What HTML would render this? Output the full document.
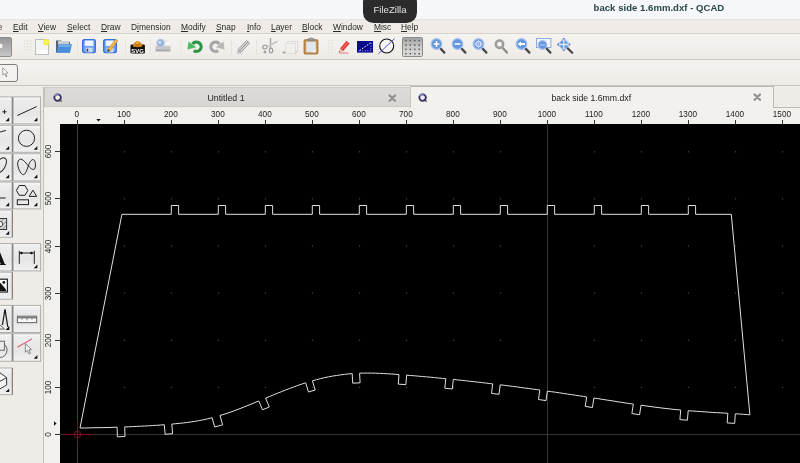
<!DOCTYPE html>
<html><head><meta charset="utf-8"><title>back side 1.6mm.dxf - QCAD</title>
<style>
*{margin:0;padding:0;box-sizing:border-box}
html,body{width:800px;height:463px;overflow:hidden;background:#efebe7;font-family:"Liberation Sans","DejaVu Sans",sans-serif;}
#root{will-change:transform;position:relative;width:800px;height:463px;overflow:hidden;background:#efebe7}
#title{position:absolute;left:0;top:0;width:800px;height:19px;background:#f5f7fa}
#title b{position:absolute;left:593.6px;top:2px;font-size:9.5px;line-height:12px;color:#2b4648;white-space:nowrap;letter-spacing:0.05px}
#tip{position:absolute;left:363px;top:-8px;width:54px;height:31px;border-radius:10.5px;background:#2b2b2b;color:#e2e2e2;font-size:9.6px;text-align:center;line-height:12px;padding-top:12.4px}
#menu{position:absolute;left:0;top:19px;width:800px;height:14px;background:linear-gradient(#e6e2dd,#efebe6 2.5px,#efebe6 11px,#f1e9e7)}
.mi{position:absolute;top:1.5px;font-size:8.8px;line-height:12px;color:#2a2a2a;white-space:nowrap;transform:scaleX(.955);transform-origin:0 0}
.mi u{text-decoration:underline;text-underline-offset:1px}
#tb1{position:absolute;left:0;top:33px;width:800px;height:27px;background:linear-gradient(#f5f3f0,#eeebe7);border-top:1px solid #d6d2cc;border-bottom:1px solid #c9c5c0}
#tb2{position:absolute;left:0;top:60px;width:800px;height:26px;background:linear-gradient(#f5f3f0,#eeebe7);border-bottom:1px solid #c9c5c0}
.ic{position:absolute;top:39px;width:16px;height:16px}
.sep{position:absolute;top:39px;width:1px;height:16px;background:#d6d2cd}
#left{position:absolute;left:0;top:87px;width:44px;height:376px;background:#efebe7;border-right:1px solid #c4c0bb}
.tbn{position:absolute;width:28px;height:28px;border:1px solid #c9c6c2;background:linear-gradient(#f6f6f6,#e2e1e0);}
.tbn:after{content:"";position:absolute;right:2px;bottom:2px;border-left:4px solid transparent;border-bottom:4px solid #111}
.tbn.na:after{display:none}
.tbn svg{position:absolute;left:0;top:0}
#tabs{position:absolute;left:44px;top:87px;width:756px;height:21px;background:#efebe7}
.tab{position:absolute;top:1.3px;height:21px;white-space:nowrap;overflow:visible;font-size:8.8px;line-height:21px;color:#222;text-align:center}
#hr{position:absolute;left:44px;top:108px;width:756px;height:16px;background:#f2f0ed}
#vr{position:absolute;left:44px;top:108px;width:16px;height:355px;background:#f2f0ed}
.rl{position:absolute;top:2px;width:30px;text-align:center;font-size:8.2px;line-height:9px;color:#222}
.tk{position:absolute;top:12px;width:1px;height:4px;background:#333}
.vl{position:absolute;left:-7px;width:30px;height:9px;text-align:center;font-size:8.2px;line-height:9px;color:#222;transform:rotate(-90deg);transform-origin:center}
.vk{position:absolute;left:12px;width:5px;height:1px;background:#333}
#cv{position:absolute;left:60px;top:124px;width:740px;height:339px;background:#000}
</style></head><body><div id="root">
<div id="title"><b>back side 1.6mm.dxf - QCAD</b></div>
<div id="menu"><span class="mi" style="left:-11.4px"><u>F</u>ile</span><span class="mi" style="left:13.0px"><u>E</u>dit</span><span class="mi" style="left:38.0px"><u>V</u>iew</span><span class="mi" style="left:67.0px"><u>S</u>elect</span><span class="mi" style="left:101.0px"><u>D</u>raw</span><span class="mi" style="left:130.8px">D<u>i</u>mension</span><span class="mi" style="left:181.0px"><u>M</u>odify</span><span class="mi" style="left:216.3px"><u>S</u>nap</span><span class="mi" style="left:246.9px"><u>I</u>nfo</span><span class="mi" style="left:270.7px"><u>L</u>ayer</span><span class="mi" style="left:302.3px"><u>B</u>lock</span><span class="mi" style="left:333.3px"><u>W</u>indow</span><span class="mi" style="left:374.2px"><u>M</u>isc</span><span class="mi" style="left:401.3px"><u>H</u>elp</span></div>
<div id="tb1"></div>
<div id="tb2"></div>
<div style="position:absolute;left:-10px;top:37px;width:22px;height:20px;border:1px solid #8f8d8a;border-radius:2px;background:linear-gradient(#979797,#c6c6c6)"></div><svg style="position:absolute;left:0px;top:43px" width="4" height="7" viewBox="0 0 4 7" ><circle cx="0.5" cy="3" r="2.2" fill="#f4f4f4"/></svg><svg style="position:absolute;left:24px;top:40px" width="9" height="12" viewBox="0 0 9 12" ><rect x="0" y="0" width="1.5" height="1.5" fill="#e5e1dc"/><rect x="3" y="0" width="1.5" height="1.5" fill="#e5e1dc"/><rect x="6" y="0" width="1.5" height="1.5" fill="#e5e1dc"/><rect x="0" y="3" width="1.5" height="1.5" fill="#e5e1dc"/><rect x="3" y="3" width="1.5" height="1.5" fill="#e5e1dc"/><rect x="6" y="3" width="1.5" height="1.5" fill="#e5e1dc"/><rect x="0" y="6" width="1.5" height="1.5" fill="#e5e1dc"/><rect x="3" y="6" width="1.5" height="1.5" fill="#e5e1dc"/><rect x="6" y="6" width="1.5" height="1.5" fill="#e5e1dc"/><rect x="0" y="9" width="1.5" height="1.5" fill="#e5e1dc"/><rect x="3" y="9" width="1.5" height="1.5" fill="#e5e1dc"/><rect x="6" y="9" width="1.5" height="1.5" fill="#e5e1dc"/></svg><svg style="position:absolute;left:34px;top:38px" width="17" height="18" viewBox="0 0 17 18" ><rect x="1.5" y="1.5" width="13" height="15" fill="#f4f4f4" stroke="#bdbdbd"/><rect x="2.5" y="12" width="11" height="4" fill="#fff" opacity=".8"/><circle cx="12.3" cy="4.2" r="3.1" fill="#f2ee3a"/><circle cx="12.3" cy="4.2" r="1.6" fill="#fbf96a"/></svg><svg style="position:absolute;left:55px;top:39px" width="18" height="16" viewBox="0 0 18 16" ><path d="M1 1.5 L6 1.5 L7.5 3 L15 3 L15 13.5 L1 13.5 Z" fill="#56606c"/><path d="M3 2 L14 2 L14 6 L3 6Z" fill="#c9ced4"/><path d="M3.2 5.2 L17 5.2 L15 13.8 L1.5 13.8 Z" fill="#4a8fdc"/><path d="M3.8 6 L16 6 L15.6 8 L3.4 8Z" fill="#6fa9e8"/></svg><svg style="position:absolute;left:82.3px;top:39.4px" width="15" height="15" viewBox="0 0 15 15" ><rect x="0.7" y="0.7" width="12.6" height="12.8" rx="1.5" fill="#72a2f2" stroke="#3273e4" stroke-width="1.4"/><rect x="2.8" y="1.5" width="8.6" height="5.4" fill="#f1f5fb"/><rect x="3.6" y="8.8" width="7" height="4.6" fill="#cdd9ef"/><rect x="4.6" y="9.8" width="1.6" height="2.8" fill="#2c3f6a"/></svg><svg style="position:absolute;left:103.3px;top:38.4px" width="17" height="17" viewBox="0 0 17 17" ><g transform="translate(0,1)"><rect x="0.7" y="0.7" width="12.6" height="12.8" rx="1.5" fill="#72a2f2" stroke="#3273e4" stroke-width="1.4"/><rect x="2.8" y="1.5" width="8.6" height="5.4" fill="#f1f5fb"/><rect x="3.6" y="8.8" width="7" height="4.6" fill="#cdd9ef"/><rect x="4.6" y="9.8" width="1.6" height="2.8" fill="#2c3f6a"/></g><path d="M5 11.2 L12.6 1.2 L14.8 2.9 L7.2 12.8 Z" fill="#f0b93a" stroke="#c98a1a" stroke-width=".6"/><path d="M5 11.2 L7.2 12.8 L4.2 14Z" fill="#444"/></svg><svg style="position:absolute;left:130px;top:39.5px" width="16" height="15" viewBox="0 0 16 15" ><rect x="0.5" y="4.6" width="14.4" height="8.8" rx="1.2" fill="#111"/><path d="M2.6 6.4 L4.4 2.8 L7.6 0.8 L10.8 2.8 L12.6 6.4 Q7.6 8 2.6 6.4Z" fill="#c27812"/><circle cx="7.6" cy="2.6" r="1.7" fill="#f2a83c"/><circle cx="4.4" cy="4.6" r="1.4" fill="#dc8e26"/><circle cx="10.8" cy="4.6" r="1.4" fill="#dc8e26"/><text x="7.7" y="12.6" font-family="Liberation Sans,sans-serif" font-size="6" font-weight="bold" fill="#fff" text-anchor="middle">SVG</text></svg><svg style="position:absolute;left:154px;top:38px" width="18" height="16" viewBox="0 0 18 16" ><path d="M4 2 L13 2 L15 8 L2 8Z" fill="#e6e8ec"/><rect x="1.5" y="8" width="15" height="5" rx="1" fill="#c8c8c8"/><rect x="1.5" y="11.5" width="15" height="2" rx="1" fill="#a9a9a9"/><circle cx="6.5" cy="5" r="3.6" fill="#8fb0e0" stroke="#b9c4d8" stroke-width="1.2"/><circle cx="5.8" cy="4.4" r="1.4" fill="#dce8fa"/><rect x="11" y="4" width="4" height="3" fill="#f6f6f6"/></svg><svg style="position:absolute;left:180px;top:40px" width="3" height="15" viewBox="0 0 3 15" ><rect x="0" y="0" width="1.5" height="1.5" fill="#e5e1dc"/><rect x="0" y="3" width="1.5" height="1.5" fill="#e5e1dc"/><rect x="0" y="6" width="1.5" height="1.5" fill="#e5e1dc"/><rect x="0" y="9" width="1.5" height="1.5" fill="#e5e1dc"/><rect x="0" y="12" width="1.5" height="1.5" fill="#e5e1dc"/></svg><svg style="position:absolute;left:186px;top:39px" width="19" height="15" viewBox="0 0 19 15" ><path d="M6.6 5 A4.7 4.7 0 1 1 7.8 11.6" fill="none" stroke="#2a9444" stroke-width="3.1"/><path d="M2.6 2.4 L1.4 10.6 L10.2 8.2 Z" fill="#4db862"/></svg><svg style="position:absolute;left:207px;top:39px" width="19" height="15" viewBox="0 0 19 15" ><path d="M12.4 5 A4.7 4.7 0 1 0 11.2 11.6" fill="none" stroke="#a6a6a6" stroke-width="3.1"/><path d="M16.4 2.4 L17.6 10.6 L8.8 8.2 Z" fill="#b6b6b6"/></svg><svg style="position:absolute;left:235px;top:39px" width="17" height="16" viewBox="0 0 17 16" ><path d="M3 10.5 L11.5 1.5 L14.5 4.2 L6 13.2 Z" fill="#d9d9d9" stroke="#9c9c9c" stroke-width="1"/><path d="M4.5 11.8 L13 2.8" stroke="#8a8a8a" stroke-width="1"/><path d="M3 10.5 L6 13.2 L2 14.2Z" fill="#b5b5b5"/><rect x="2" y="14.3" width="6" height="1" fill="#d0d0d0"/></svg><svg style="position:absolute;left:260px;top:37px" width="19" height="18" viewBox="0 0 19 18" ><path d="M10.5 1 L10.5 11" stroke="#a8a8a8" stroke-width="1.4"/><path d="M17.5 4.2 L8.5 9" stroke="#c4c4c4" stroke-width="1.6"/><ellipse cx="5" cy="10" rx="2.3" ry="1.8" fill="none" stroke="#9d9d9d" stroke-width="1.2" transform="rotate(-20 5 10)"/><ellipse cx="11" cy="13.5" rx="1.7" ry="2.4" fill="none" stroke="#9d9d9d" stroke-width="1.2"/><path d="M3.5 15 L6.5 15 M5 13.5 L5 16.5" stroke="#888" stroke-width="1"/></svg><svg style="position:absolute;left:282px;top:40px" width="18" height="15" viewBox="0 0 18 15" ><rect x="5.5" y="1.5" width="10" height="10" fill="#f4f3f1" stroke="#dcdad7"/><rect x="3.5" y="3.5" width="10" height="10" fill="#f1efec" stroke="#e0deda"/><path d="M13.5 11 L16 11 L13.5 13.5Z" fill="#ccc"/><path d="M0.8 12.5 L3.2 12.5 M2 11.3 L2 13.7" stroke="#999" stroke-width="1"/></svg><svg style="position:absolute;left:303px;top:37px" width="17" height="18" viewBox="0 0 17 18" ><rect x="1.2" y="2.8" width="13.6" height="14" rx="1" fill="#c8955a" stroke="#a87a3a" stroke-width="1.2"/><rect x="3.2" y="4.6" width="9.6" height="10.6" fill="#dfe6ee"/><path d="M9 15.2 L12.8 11.5 L12.8 15.2Z" fill="#f6f6f6"/><rect x="4.8" y="1" width="6.4" height="3.2" rx="1.2" fill="#8a8a8a"/><rect x="6.4" y="0.4" width="3.2" height="2" rx="1" fill="#a5a5a5"/></svg><svg style="position:absolute;left:328px;top:40px" width="6" height="15" viewBox="0 0 6 15" ><rect x="0" y="0" width="1.5" height="1.5" fill="#e5e1dc"/><rect x="3" y="0" width="1.5" height="1.5" fill="#e5e1dc"/><rect x="0" y="3" width="1.5" height="1.5" fill="#e5e1dc"/><rect x="3" y="3" width="1.5" height="1.5" fill="#e5e1dc"/><rect x="0" y="6" width="1.5" height="1.5" fill="#e5e1dc"/><rect x="3" y="6" width="1.5" height="1.5" fill="#e5e1dc"/><rect x="0" y="9" width="1.5" height="1.5" fill="#e5e1dc"/><rect x="3" y="9" width="1.5" height="1.5" fill="#e5e1dc"/><rect x="0" y="12" width="1.5" height="1.5" fill="#e5e1dc"/><rect x="3" y="12" width="1.5" height="1.5" fill="#e5e1dc"/></svg><svg style="position:absolute;left:337px;top:39px" width="15" height="15" viewBox="0 0 15 15" ><path d="M3 9.6 L9.6 1.8 L12.6 4.4 L6 12.2 Z" fill="#e23a32"/><path d="M4.4 10.8 L11 3" stroke="#f2837d" stroke-width="1"/><path d="M3 9.6 L6 12.2 L1.8 13.2Z" fill="#e9b9a0"/><path d="M1.8 13.2 L3 12.9 L2.4 12.1Z" fill="#333"/><rect x="2" y="13.4" width="9.5" height="1.2" fill="#e98b8b"/></svg><svg style="position:absolute;left:357px;top:41px" width="17" height="12" viewBox="0 0 17 12" ><rect x="0" y="0" width="16" height="11.6" fill="#0a0a8c"/><path d="M2.5 9.5 L13.5 2" stroke="#fff" stroke-width="1" stroke-dasharray="1.5 1.5"/><path d="M2.5 9.8 L14 9.8 L14 1.8" fill="none" stroke="#b9c0ff" stroke-width=".9" stroke-dasharray="1 1.6"/></svg><svg style="position:absolute;left:377px;top:37px" width="19" height="18" viewBox="0 0 19 18" ><circle cx="9.7" cy="9" r="7" fill="#f6f5f3" stroke="#111" stroke-width="1.1"/><path d="M1.5 16.8 L17.5 1.6" stroke="#4a5ad8" stroke-width="1"/></svg><div style="position:absolute;left:402px;top:36.5px;width:21px;height:20.5px;border:1px solid #8c8a87;border-radius:1.5px;background:linear-gradient(#a4a4a4,#cfcfcf 60%,#dadada)"></div><svg style="position:absolute;left:402px;top:37px" width="21" height="20" viewBox="0 0 21 20" ><rect x="3.2" y="2.8" width="1.5" height="1.5" fill="#5a5a5a"/><rect x="7.6" y="2.8" width="1.5" height="1.5" fill="#5a5a5a"/><rect x="12.0" y="2.8" width="1.5" height="1.5" fill="#5a5a5a"/><rect x="16.4" y="2.8" width="1.5" height="1.5" fill="#5a5a5a"/><rect x="3.2" y="7.2" width="1.5" height="1.5" fill="#5a5a5a"/><rect x="7.6" y="7.2" width="1.5" height="1.5" fill="#5a5a5a"/><rect x="12.0" y="7.2" width="1.5" height="1.5" fill="#5a5a5a"/><rect x="16.4" y="7.2" width="1.5" height="1.5" fill="#5a5a5a"/><rect x="3.2" y="11.6" width="1.5" height="1.5" fill="#5a5a5a"/><rect x="7.6" y="11.6" width="1.5" height="1.5" fill="#5a5a5a"/><rect x="12.0" y="11.6" width="1.5" height="1.5" fill="#5a5a5a"/><rect x="16.4" y="11.6" width="1.5" height="1.5" fill="#5a5a5a"/><rect x="3.2" y="16.0" width="1.5" height="1.5" fill="#5a5a5a"/><rect x="7.6" y="16.0" width="1.5" height="1.5" fill="#5a5a5a"/><rect x="12.0" y="16.0" width="1.5" height="1.5" fill="#5a5a5a"/><rect x="16.4" y="16.0" width="1.5" height="1.5" fill="#5a5a5a"/></svg><svg style="position:absolute;left:430px;top:38px" width="17" height="17" viewBox="0 0 17 17" ><path d="M10.4 10.4 L14.4 14.6" stroke="#4a4a4a" stroke-width="2.3" stroke-linecap="round"/><circle cx="6.5" cy="6" r="5.3" fill="#6595dc" stroke="#a3c0ee" stroke-width="1.2"/><path d="M3.6 6 L9.4 6 M6.5 3.1 L6.5 8.9" stroke="#fff" stroke-width="1.6"/></svg><svg style="position:absolute;left:451px;top:38px" width="17" height="17" viewBox="0 0 17 17" ><path d="M10.4 10.4 L14.4 14.6" stroke="#4a4a4a" stroke-width="2.3" stroke-linecap="round"/><circle cx="6.5" cy="6" r="5.3" fill="#6595dc" stroke="#a3c0ee" stroke-width="1.2"/><path d="M3.6 6 L9.4 6" stroke="#fff" stroke-width="1.6"/></svg><svg style="position:absolute;left:472px;top:38px" width="17" height="17" viewBox="0 0 17 17" ><path d="M10.4 10.4 L14.4 14.6" stroke="#4a4a4a" stroke-width="2.3" stroke-linecap="round"/><circle cx="6.5" cy="6" r="5.3" fill="#6595dc" stroke="#a3c0ee" stroke-width="1.2"/><circle cx="6.5" cy="6" r="2.6" fill="none" stroke="#d9e6fa" stroke-width="1.3"/><path d="M6.5 1.5 L6.5 10.5 M2 6 L11 6" stroke="#c3d7f5" stroke-width=".8"/></svg><svg style="position:absolute;left:493px;top:38px" width="17" height="17" viewBox="0 0 17 17" ><path d="M9.6 9.8 L14 14.6" stroke="#8e8e8e" stroke-width="2.3" stroke-linecap="round"/><circle cx="6.5" cy="6.2" r="3.7" fill="#f2f2f2" stroke="#9c9c9c" stroke-width="2.5"/></svg><svg style="position:absolute;left:514.5px;top:38px" width="17" height="17" viewBox="0 0 17 17" ><path d="M10.4 10.4 L14.4 14.6" stroke="#4a4a4a" stroke-width="2.3" stroke-linecap="round"/><circle cx="6.5" cy="6" r="5.3" fill="#6595dc" stroke="#a3c0ee" stroke-width="1.2"/><path d="M2.4 6 L6 3.4 L6 5 L10 5 L10 7 L6 7 L6 8.6Z" fill="#fff"/></svg><svg style="position:absolute;left:536px;top:38px" width="17" height="17" viewBox="0 0 17 17" ><rect x="0.5" y="0.5" width="14.4" height="9" fill="#f4f6fb" stroke="#8fa8dc" stroke-width="1"/><path d="M10.4 10.4 L14.4 14.6" stroke="#4a4a4a" stroke-width="2.3" stroke-linecap="round"/><circle cx="6.5" cy="7" r="4.3" fill="#6595dc" stroke="#a3c0ee" stroke-width="1.2"/><path d="M4 7 L9 7" stroke="#a9c4ee" stroke-width="1.4"/></svg><svg style="position:absolute;left:556px;top:37px" width="19" height="18" viewBox="0 0 19 18" ><path d="M11.4 11 L16.2 15.8" stroke="#4a4a4a" stroke-width="2.3" stroke-linecap="round"/><circle cx="7.8" cy="7.5" r="4.4" fill="#6595dc" stroke="#a3c0ee" stroke-width="1"/><path d="M7.8 0.4 L9.8 2.8 L5.8 2.8Z M7.8 14.6 L9.8 12.2 L5.8 12.2Z M0.7 7.5 L3.1 5.5 L3.1 9.5Z M14.9 7.5 L12.5 5.5 L12.5 9.5Z" fill="#5b8bd6"/><path d="M7.8 2.6 L7.8 12.4 M2.9 7.5 L12.7 7.5" stroke="#e3ecfb" stroke-width="1.3"/></svg><i style="position:absolute;left:76.5px;top:39px;width:1px;height:16px;background:#e6e2dd"></i><i style="position:absolute;left:124.5px;top:39px;width:1px;height:16px;background:#e6e2dd"></i><i style="position:absolute;left:150.0px;top:39px;width:1px;height:16px;background:#e6e2dd"></i><i style="position:absolute;left:230.5px;top:39px;width:1px;height:16px;background:#e6e2dd"></i><i style="position:absolute;left:256.1px;top:39px;width:1px;height:16px;background:#e6e2dd"></i><div style="position:absolute;left:-6px;top:64.2px;width:24px;height:17.4px;border:1.2px solid #807e7c;border-radius:3px;background:#f4f2f0"></div><svg style="position:absolute;left:2px;top:67px" width="7" height="11" viewBox="0 0 7 11" ><path d="M0.8 0.8 L0.8 8.2 L2.6 6.6 L4 9.8 L5 9.3 L3.7 6.2 L6 6 Z" fill="#fbfbfb" stroke="#8b8b8b" stroke-width=".8"/></svg>
<div id="tip">FileZilla</div>
<div id="left">
<svg style="position:absolute;left:0;top:0" width="43" height="376" viewBox="0 0 43 376"><defs><linearGradient id="bg" x1="0" y1="0" x2="0" y2="1"><stop offset="0" stop-color="#fbfbfb"/><stop offset="0.12" stop-color="#ededed"/><stop offset="0.6" stop-color="#e6e6e6"/><stop offset="1" stop-color="#f1f1f1"/></linearGradient></defs><rect x="-16" y="9.9" width="28" height="27.0" fill="url(#bg)" stroke="#b0aeab" stroke-width="1"/><path d="M9.2 34.300000000000004 L5.499999999999999 34.300000000000004 L9.2 30.600000000000005Z" fill="#111"/><rect x="13.2" y="9.9" width="27.4" height="27.0" fill="url(#bg)" stroke="#b0aeab" stroke-width="1"/><path d="M37.4 34.300000000000004 L33.699999999999996 34.300000000000004 L37.4 30.600000000000005Z" fill="#111"/><rect x="12.1" y="9.9" width="0.9" height="27.0" fill="#7c7c7c"/><rect x="-16" y="38.3" width="28" height="27.0" fill="url(#bg)" stroke="#b0aeab" stroke-width="1"/><path d="M9.2 62.70000000000001 L5.499999999999999 62.70000000000001 L9.2 59.00000000000001Z" fill="#111"/><rect x="13.2" y="38.3" width="27.4" height="27.0" fill="url(#bg)" stroke="#b0aeab" stroke-width="1"/><path d="M37.4 62.70000000000001 L33.699999999999996 62.70000000000001 L37.4 59.00000000000001Z" fill="#111"/><rect x="12.1" y="38.3" width="0.9" height="27.0" fill="#7c7c7c"/><rect x="-16" y="66.8" width="28" height="27.1" fill="url(#bg)" stroke="#b0aeab" stroke-width="1"/><path d="M9.2 91.30000000000001 L5.499999999999999 91.30000000000001 L9.2 87.60000000000001Z" fill="#111"/><rect x="13.2" y="66.8" width="27.4" height="27.1" fill="url(#bg)" stroke="#b0aeab" stroke-width="1"/><path d="M37.4 91.30000000000001 L33.699999999999996 91.30000000000001 L37.4 87.60000000000001Z" fill="#111"/><rect x="12.1" y="66.8" width="0.9" height="27.1" fill="#7c7c7c"/><rect x="-16" y="95.1" width="28" height="26.8" fill="url(#bg)" stroke="#b0aeab" stroke-width="1"/><path d="M9.2 119.30000000000001 L5.499999999999999 119.30000000000001 L9.2 115.60000000000001Z" fill="#111"/><rect x="13.2" y="95.1" width="27.4" height="26.8" fill="url(#bg)" stroke="#b0aeab" stroke-width="1"/><path d="M37.4 119.30000000000001 L33.699999999999996 119.30000000000001 L37.4 115.60000000000001Z" fill="#111"/><rect x="12.1" y="95.1" width="0.9" height="26.8" fill="#7c7c7c"/><rect x="-16" y="123.0" width="28" height="27.3" fill="url(#bg)" stroke="#b0aeab" stroke-width="1"/><path d="M9.2 147.70000000000002 L5.499999999999999 147.70000000000002 L9.2 144.00000000000003Z" fill="#111"/><rect x="12.1" y="123.0" width="0.9" height="27.3" fill="#7c7c7c"/><rect x="-16" y="156.6" width="28" height="27.3" fill="url(#bg)" stroke="#b0aeab" stroke-width="1"/><rect x="13.2" y="156.6" width="27.4" height="27.3" fill="url(#bg)" stroke="#b0aeab" stroke-width="1"/><path d="M37.4 181.29999999999998 L33.699999999999996 181.29999999999998 L37.4 177.6Z" fill="#111"/><rect x="12.1" y="156.6" width="0.9" height="27.3" fill="#7c7c7c"/><rect x="-16" y="185.2" width="28" height="27.1" fill="url(#bg)" stroke="#b0aeab" stroke-width="1"/><rect x="12.1" y="185.2" width="0.9" height="27.1" fill="#7c7c7c"/><rect x="-16" y="218.4" width="28" height="27.1" fill="url(#bg)" stroke="#b0aeab" stroke-width="1"/><path d="M9.2 242.9 L5.499999999999999 242.9 L9.2 239.20000000000002Z" fill="#111"/><rect x="13.2" y="218.4" width="27.4" height="27.1" fill="url(#bg)" stroke="#b0aeab" stroke-width="1"/><rect x="12.1" y="218.4" width="0.9" height="27.1" fill="#7c7c7c"/><rect x="-16" y="246.8" width="28" height="27.5" fill="url(#bg)" stroke="#b0aeab" stroke-width="1"/><rect x="13.2" y="246.8" width="27.4" height="27.5" fill="url(#bg)" stroke="#b0aeab" stroke-width="1"/><path d="M37.4 271.7 L33.699999999999996 271.7 L37.4 268.0Z" fill="#111"/><rect x="12.1" y="246.8" width="0.9" height="27.5" fill="#7c7c7c"/><rect x="-16" y="281.0" width="28" height="26.7" fill="url(#bg)" stroke="#b0aeab" stroke-width="1"/><path d="M9.2 305.09999999999997 L5.499999999999999 305.09999999999997 L9.2 301.4Z" fill="#111"/><rect x="12.1" y="281.0" width="0.9" height="26.7" fill="#7c7c7c"/><path d="M2.4 24.799999999999997 L6.6 24.799999999999997 M4.5 22.700000000000003 L4.5 26.900000000000006" fill="none" stroke="#222" stroke-width="1"/><path d="M17.3 28.5 L36.7 19.599999999999994" fill="none" stroke="#222" stroke-width="1"/><path d="M-6 48 Q0 44.400000000000006 6 43.400000000000006" fill="none" stroke="#222" stroke-width="1"/><circle cx="26.5" cy="51.30000000000001" r="8.1" fill="none" stroke="#222" stroke-width="1"/><ellipse cx="0.5" cy="78.5" rx="4.6" ry="8.6" transform="rotate(32 0.5 78.5)" fill="none" stroke="#222" stroke-width="1"/><path d="M18.2 74 C21 69 25.5 75.5 28.5 79 C31 82 35 85 35.4 79 C35.8 73 33 70.5 30.4 74.5 C27.5 79 26 89.5 22.4 87.4 C19.4 85.6 16.4 77.4 18.2 74Z" fill="none" stroke="#222" stroke-width="1"/><path d="M-4 111 L5.6 111" fill="none" stroke="#222" stroke-width="1"/><path d="M27.8 103.4 L25.0 108.3 L19.3 108.3 L16.4 103.4 L19.2 98.5 L25.0 98.5Z" fill="none" stroke="#222" stroke-width="1"/><path d="M32.9 103.19999999999999 L29.2 109.4 L36.7 109.4Z" fill="none" stroke="#222" stroke-width="1"/><rect x="17.3" y="112.80000000000001" width="11.2" height="4.8" fill="none" stroke="#222" stroke-width="1"/><rect x="-6" y="131.5" width="12.6" height="11" fill="#d9d9d9" stroke="#333" stroke-width="1"/><path d="M-2 142.5 L6.6 134 M2 142.5 L6.6 138 M-5 141 L4 131.5" stroke="#777" stroke-width=".8"/><circle cx="0.2" cy="137" r="2.6" fill="#f2f2f2" stroke="#444" stroke-width="1"/><text x="-2.6" y="177.89999999999998" font-family="Liberation Serif,serif" font-size="24" font-weight="bold" fill="#111" text-anchor="middle">A</text><path d="M19.3 163.8 L19.3 176.8 M34.3 163.8 L34.3 176.8 M19.3 166 L34.3 166" fill="none" stroke="#222" stroke-width="1"/><circle cx="21.4" cy="166" r="1.3" fill="#111"/><circle cx="31.4" cy="166" r="1.3" fill="#111"/><rect x="-8" y="192.2" width="15.4" height="12.8" fill="#f7f7f7" stroke="#222" stroke-width="1.2"/><path d="M-7 196 L0.5 196 L6 202.60000000000002 L6 204 L-7 204Z" fill="#111"/><circle cx="3.8" cy="195.39999999999998" r="1.4" fill="#111"/><path d="M5 222.5 L2.4 238 M5 222.5 L7.8 240" fill="none" stroke="#222" stroke-width="1.3"/><path d="M5 221.8 L3.8 226 L6.2 226Z" fill="#111"/><path d="M-3 242 L4.5 242 L0 238" fill="none" stroke="#555" stroke-width=".9"/><path d="M6 243 L9.2 243 L9.2 239.8Z" fill="#111"/><rect x="17.4" y="229.2" width="19.2" height="6.4" fill="#fafafa" stroke="#6f6f6f" stroke-width="1.1"/><path d="M18 230.60000000000002 L36 230.60000000000002" stroke="#7a7a7a" stroke-width="1.6"/><path d="M22 230 L22 232.60000000000002 M27 230 L27 233.39999999999998 M32 230 L32 232.60000000000002" stroke="#777" stroke-width="1"/><circle cx="-0.5" cy="263" r="7.6" fill="none" stroke="#666" stroke-width="1"/><rect x="-6" y="254.2" width="10.4" height="9" fill="#ececec" stroke="#666" stroke-width="1"/><path d="M17.3 260.3 L31.9 251.89999999999998" stroke="#df6480" stroke-width="1.2"/><path d="M25.3 256.6 L25.3 265.2 L27.4 263.4 L29 267 L30.4 266.4 L28.9 262.8 L31.6 262.6Z" fill="#f4f4f4" stroke="#8a8a8a" stroke-width="1"/><path d="M-8 287.5 L0 285.8 L6.6 290.6 L6.6 298 L-2 303 M6.6 290.6 L-3 296" fill="#f6f6f6" stroke="#333" stroke-width="1"/></svg><div style="position:absolute;left:8px;top:3px;width:10px;height:3px;background:repeating-linear-gradient(90deg,#e8e5e1 0 1.5px,transparent 1.5px 3px)"></div>
</div>
<div id="tabs">
<div style="position:absolute;left:-0.5px;top:-0.5px;width:367px;height:20.5px;background:linear-gradient(#dddbd8,#d8d6d3);border-top:1px solid #cfccc8;border-left:1px solid #c4c1bd;border-bottom:1px solid #cfccc8"></div><div style="position:absolute;left:366px;top:-1.5px;width:363.5px;height:22.5px;background:#f3f1ee;border-top:1px solid #b9b5b0;border-left:1px solid #c9c5c0;border-right:1px solid #bdb9b4"></div><div style="position:absolute;left:729.5px;top:19.5px;width:27px;height:1px;background:#bdb9b4"></div><span class="tab" style="left:163.4px;width:36px">Untitled 1</span><span class="tab" style="left:507.4px;width:78px;font-size:8.7px">back side 1.6mm.dxf</span><svg style="position:absolute;left:9.200000000000003px;top:5.799999999999997px" width="10" height="10" viewBox="0 0 10 10" ><circle cx="4.6" cy="4.6" r="3.3" fill="#f1eee2" stroke="#34326c" stroke-width="1.8"/><path d="M1.5 3.2 A3.3 3.3 0 0 1 5.6 1.4" fill="none" stroke="#8583b8" stroke-width="1.7"/><path d="M6.2 6.4 L8.6 8.5" stroke="#2c2a55" stroke-width="1.6"/><path d="M6.9 7.9 L8.9 8" stroke="#b89448" stroke-width=".9"/></svg><svg style="position:absolute;left:374.2px;top:5.799999999999997px" width="10" height="10" viewBox="0 0 10 10" ><circle cx="4.6" cy="4.6" r="3.3" fill="#f1eee2" stroke="#34326c" stroke-width="1.8"/><path d="M1.5 3.2 A3.3 3.3 0 0 1 5.6 1.4" fill="none" stroke="#8583b8" stroke-width="1.7"/><path d="M6.2 6.4 L8.6 8.5" stroke="#2c2a55" stroke-width="1.6"/><path d="M6.9 7.9 L8.9 8" stroke="#b89448" stroke-width=".9"/></svg><svg style="position:absolute;left:344.3px;top:7.0px" width="9" height="9" viewBox="0 0 9 9" ><path d="M1.6 1.4 L7 6.8 M7 1.4 L1.6 6.8" stroke="#8d8d8d" stroke-width="2.1" stroke-linecap="round"/></svg><svg style="position:absolute;left:709.2px;top:6.200000000000003px" width="9" height="9" viewBox="0 0 9 9" ><path d="M1.6 1.4 L7 6.8 M7 1.4 L1.6 6.8" stroke="#8d8d8d" stroke-width="2.1" stroke-linecap="round"/></svg>
</div>
<div id="hr"></div>
<div id="vr"></div>
<!--RULERS--><svg style="position:absolute;left:96.3px;top:118.8px" width="5" height="3" viewBox="0 0 5 3" ><path d="M0.3 0 L4.7 0 L2.5 2.6Z" fill="#111"/></svg><svg style="position:absolute;left:54.2px;top:421.1px" width="3" height="5" viewBox="0 0 3 5" ><path d="M0 0.3 L0 4.7 L2.6 2.5Z" fill="#111"/></svg><span class="rl" style="left:61.9px;top:110px">0</span><i class="tk" style="left:77.0px;top:120px"></i><span class="rl" style="left:108.9px;top:110px">100</span><i class="tk" style="left:124.0px;top:120px"></i><span class="rl" style="left:155.9px;top:110px">200</span><i class="tk" style="left:171.0px;top:120px"></i><span class="rl" style="left:202.9px;top:110px">300</span><i class="tk" style="left:218.0px;top:120px"></i><span class="rl" style="left:249.9px;top:110px">400</span><i class="tk" style="left:265.0px;top:120px"></i><span class="rl" style="left:296.9px;top:110px">500</span><i class="tk" style="left:312.0px;top:120px"></i><span class="rl" style="left:343.9px;top:110px">600</span><i class="tk" style="left:359.0px;top:120px"></i><span class="rl" style="left:390.9px;top:110px">700</span><i class="tk" style="left:406.0px;top:120px"></i><span class="rl" style="left:437.9px;top:110px">800</span><i class="tk" style="left:453.0px;top:120px"></i><span class="rl" style="left:484.9px;top:110px">900</span><i class="tk" style="left:500.0px;top:120px"></i><span class="rl" style="left:531.9px;top:110px">1000</span><i class="tk" style="left:547.0px;top:120px"></i><span class="rl" style="left:578.9px;top:110px">1100</span><i class="tk" style="left:594.0px;top:120px"></i><span class="rl" style="left:625.9px;top:110px">1200</span><i class="tk" style="left:641.0px;top:120px"></i><span class="rl" style="left:672.9px;top:110px">1300</span><i class="tk" style="left:688.0px;top:120px"></i><span class="rl" style="left:719.9px;top:110px">1400</span><i class="tk" style="left:735.0px;top:120px"></i><span class="rl" style="left:766.9px;top:110px">1500</span><i class="tk" style="left:782.0px;top:120px"></i><span class="vl" style="left:33.4px;top:430.0px">0</span><i class="vk" style="left:55px;top:434.0px"></i><span class="vl" style="left:33.4px;top:382.9px">100</span><i class="vk" style="left:55px;top:386.9px"></i><span class="vl" style="left:33.4px;top:335.8px">200</span><i class="vk" style="left:55px;top:339.8px"></i><span class="vl" style="left:33.4px;top:288.6px">300</span><i class="vk" style="left:55px;top:292.6px"></i><span class="vl" style="left:33.4px;top:241.5px">400</span><i class="vk" style="left:55px;top:245.5px"></i><span class="vl" style="left:33.4px;top:194.4px">500</span><i class="vk" style="left:55px;top:198.4px"></i><span class="vl" style="left:33.4px;top:147.3px">600</span><i class="vk" style="left:55px;top:151.3px"></i>
<div id="cv"><svg width="740" height="339" viewBox="0 0 740 339">
<g fill="#474747"><rect x="16.9" y="309.9" width="1.2" height="1.2"/><rect x="16.9" y="262.8" width="1.2" height="1.2"/><rect x="16.9" y="215.7" width="1.2" height="1.2"/><rect x="16.9" y="168.5" width="1.2" height="1.2"/><rect x="16.9" y="121.4" width="1.2" height="1.2"/><rect x="16.9" y="74.3" width="1.2" height="1.2"/><rect x="16.9" y="27.2" width="1.2" height="1.2"/><rect x="63.9" y="309.9" width="1.2" height="1.2"/><rect x="63.9" y="262.8" width="1.2" height="1.2"/><rect x="63.9" y="215.7" width="1.2" height="1.2"/><rect x="63.9" y="168.5" width="1.2" height="1.2"/><rect x="63.9" y="121.4" width="1.2" height="1.2"/><rect x="63.9" y="74.3" width="1.2" height="1.2"/><rect x="63.9" y="27.2" width="1.2" height="1.2"/><rect x="110.9" y="309.9" width="1.2" height="1.2"/><rect x="110.9" y="262.8" width="1.2" height="1.2"/><rect x="110.9" y="215.7" width="1.2" height="1.2"/><rect x="110.9" y="168.5" width="1.2" height="1.2"/><rect x="110.9" y="121.4" width="1.2" height="1.2"/><rect x="110.9" y="74.3" width="1.2" height="1.2"/><rect x="110.9" y="27.2" width="1.2" height="1.2"/><rect x="157.9" y="309.9" width="1.2" height="1.2"/><rect x="157.9" y="262.8" width="1.2" height="1.2"/><rect x="157.9" y="215.7" width="1.2" height="1.2"/><rect x="157.9" y="168.5" width="1.2" height="1.2"/><rect x="157.9" y="121.4" width="1.2" height="1.2"/><rect x="157.9" y="74.3" width="1.2" height="1.2"/><rect x="157.9" y="27.2" width="1.2" height="1.2"/><rect x="204.9" y="309.9" width="1.2" height="1.2"/><rect x="204.9" y="262.8" width="1.2" height="1.2"/><rect x="204.9" y="215.7" width="1.2" height="1.2"/><rect x="204.9" y="168.5" width="1.2" height="1.2"/><rect x="204.9" y="121.4" width="1.2" height="1.2"/><rect x="204.9" y="74.3" width="1.2" height="1.2"/><rect x="204.9" y="27.2" width="1.2" height="1.2"/><rect x="251.9" y="309.9" width="1.2" height="1.2"/><rect x="251.9" y="262.8" width="1.2" height="1.2"/><rect x="251.9" y="215.7" width="1.2" height="1.2"/><rect x="251.9" y="168.5" width="1.2" height="1.2"/><rect x="251.9" y="121.4" width="1.2" height="1.2"/><rect x="251.9" y="74.3" width="1.2" height="1.2"/><rect x="251.9" y="27.2" width="1.2" height="1.2"/><rect x="298.9" y="309.9" width="1.2" height="1.2"/><rect x="298.9" y="262.8" width="1.2" height="1.2"/><rect x="298.9" y="215.7" width="1.2" height="1.2"/><rect x="298.9" y="168.5" width="1.2" height="1.2"/><rect x="298.9" y="121.4" width="1.2" height="1.2"/><rect x="298.9" y="74.3" width="1.2" height="1.2"/><rect x="298.9" y="27.2" width="1.2" height="1.2"/><rect x="345.9" y="309.9" width="1.2" height="1.2"/><rect x="345.9" y="262.8" width="1.2" height="1.2"/><rect x="345.9" y="215.7" width="1.2" height="1.2"/><rect x="345.9" y="168.5" width="1.2" height="1.2"/><rect x="345.9" y="121.4" width="1.2" height="1.2"/><rect x="345.9" y="74.3" width="1.2" height="1.2"/><rect x="345.9" y="27.2" width="1.2" height="1.2"/><rect x="392.9" y="309.9" width="1.2" height="1.2"/><rect x="392.9" y="262.8" width="1.2" height="1.2"/><rect x="392.9" y="215.7" width="1.2" height="1.2"/><rect x="392.9" y="168.5" width="1.2" height="1.2"/><rect x="392.9" y="121.4" width="1.2" height="1.2"/><rect x="392.9" y="74.3" width="1.2" height="1.2"/><rect x="392.9" y="27.2" width="1.2" height="1.2"/><rect x="439.9" y="309.9" width="1.2" height="1.2"/><rect x="439.9" y="262.8" width="1.2" height="1.2"/><rect x="439.9" y="215.7" width="1.2" height="1.2"/><rect x="439.9" y="168.5" width="1.2" height="1.2"/><rect x="439.9" y="121.4" width="1.2" height="1.2"/><rect x="439.9" y="74.3" width="1.2" height="1.2"/><rect x="439.9" y="27.2" width="1.2" height="1.2"/><rect x="486.9" y="309.9" width="1.2" height="1.2"/><rect x="486.9" y="262.8" width="1.2" height="1.2"/><rect x="486.9" y="215.7" width="1.2" height="1.2"/><rect x="486.9" y="168.5" width="1.2" height="1.2"/><rect x="486.9" y="121.4" width="1.2" height="1.2"/><rect x="486.9" y="74.3" width="1.2" height="1.2"/><rect x="486.9" y="27.2" width="1.2" height="1.2"/><rect x="533.9" y="309.9" width="1.2" height="1.2"/><rect x="533.9" y="262.8" width="1.2" height="1.2"/><rect x="533.9" y="215.7" width="1.2" height="1.2"/><rect x="533.9" y="168.5" width="1.2" height="1.2"/><rect x="533.9" y="121.4" width="1.2" height="1.2"/><rect x="533.9" y="74.3" width="1.2" height="1.2"/><rect x="533.9" y="27.2" width="1.2" height="1.2"/><rect x="580.9" y="309.9" width="1.2" height="1.2"/><rect x="580.9" y="262.8" width="1.2" height="1.2"/><rect x="580.9" y="215.7" width="1.2" height="1.2"/><rect x="580.9" y="168.5" width="1.2" height="1.2"/><rect x="580.9" y="121.4" width="1.2" height="1.2"/><rect x="580.9" y="74.3" width="1.2" height="1.2"/><rect x="580.9" y="27.2" width="1.2" height="1.2"/><rect x="627.9" y="309.9" width="1.2" height="1.2"/><rect x="627.9" y="262.8" width="1.2" height="1.2"/><rect x="627.9" y="215.7" width="1.2" height="1.2"/><rect x="627.9" y="168.5" width="1.2" height="1.2"/><rect x="627.9" y="121.4" width="1.2" height="1.2"/><rect x="627.9" y="74.3" width="1.2" height="1.2"/><rect x="627.9" y="27.2" width="1.2" height="1.2"/><rect x="674.9" y="309.9" width="1.2" height="1.2"/><rect x="674.9" y="262.8" width="1.2" height="1.2"/><rect x="674.9" y="215.7" width="1.2" height="1.2"/><rect x="674.9" y="168.5" width="1.2" height="1.2"/><rect x="674.9" y="121.4" width="1.2" height="1.2"/><rect x="674.9" y="74.3" width="1.2" height="1.2"/><rect x="674.9" y="27.2" width="1.2" height="1.2"/><rect x="721.9" y="309.9" width="1.2" height="1.2"/><rect x="721.9" y="262.8" width="1.2" height="1.2"/><rect x="721.9" y="215.7" width="1.2" height="1.2"/><rect x="721.9" y="168.5" width="1.2" height="1.2"/><rect x="721.9" y="121.4" width="1.2" height="1.2"/><rect x="721.9" y="74.3" width="1.2" height="1.2"/><rect x="721.9" y="27.2" width="1.2" height="1.2"/></g>
<line x1="0" y1="310.5" x2="740" y2="310.5" stroke="#353535" stroke-width="1"/>
<line x1="17.5" y1="0" x2="17.5" y2="339" stroke="#3e3e3e" stroke-width="1"/>
<line x1="487.5" y1="0" x2="487.5" y2="339" stroke="#353535" stroke-width="1"/>
<path d="M20.0 304.0 L24.0 304.0 L28.0 303.9 L32.0 303.8 L36.0 303.7 L40.0 303.7 L44.0 303.6 L48.0 303.5 L52.0 303.4 L56.0 303.2 L57.1 303.2 L57.4 312.8 L65.0 312.5 L64.7 302.9 L64.7 302.9 L68.7 302.8 L72.7 302.6 L76.7 302.4 L80.7 302.2 L84.7 302.0 L88.7 301.8 L92.7 301.5 L96.7 301.3 L100.7 301.0 L104.3 300.7 L105.1 310.3 L112.6 309.7 L111.8 300.1 L111.8 300.1 L115.8 299.7 L119.8 299.3 L123.8 298.9 L127.8 298.4 L131.8 297.8 L135.8 297.2 L139.8 296.5 L143.8 295.7 L147.8 294.8 L151.8 293.8 L152.1 293.8 L154.7 303.0 L162.6 300.8 L160.0 291.5 L160.0 291.5 L164.0 290.3 L168.0 289.0 L172.0 287.6 L176.0 286.1 L180.0 284.6 L184.0 283.0 L188.0 281.4 L192.0 279.8 L196.0 278.1 L198.8 277.0 L202.5 285.8 L209.3 283.0 L205.6 274.1 L205.6 274.1 L209.6 272.5 L213.6 270.8 L217.6 269.2 L221.6 267.6 L225.6 266.0 L229.6 264.5 L233.6 263.0 L237.6 261.5 L241.6 260.2 L245.6 258.8 L245.7 258.8 L248.5 268.0 L255.2 266.0 L252.4 256.8 L252.4 256.8 L256.4 255.7 L260.4 254.7 L264.4 253.7 L268.4 252.9 L272.4 252.1 L276.4 251.5 L280.4 250.9 L284.4 250.4 L288.4 249.9 L292.2 249.6 L292.7 259.2 L300.1 258.8 L299.6 249.2 L299.6 249.2 L303.6 249.1 L307.6 249.1 L311.6 249.1 L315.6 249.2 L319.6 249.4 L323.6 249.5 L327.6 249.8 L331.6 250.0 L335.6 250.3 L339.0 250.6 L338.3 260.1 L345.9 260.7 L346.6 251.2 L346.6 251.2 L350.6 251.5 L354.6 251.8 L358.6 252.2 L362.6 252.5 L366.6 252.9 L370.6 253.2 L374.6 253.6 L378.6 254.0 L382.6 254.4 L385.8 254.7 L384.8 264.2 L392.3 265.0 L393.3 255.4 L393.3 255.4 L397.3 255.9 L401.3 256.3 L405.3 256.7 L409.3 257.2 L413.3 257.6 L417.3 258.1 L421.3 258.5 L425.3 259.0 L429.3 259.5 L432.7 259.9 L431.5 269.4 L439.0 270.3 L440.2 260.8 L440.2 260.8 L444.2 261.3 L448.2 261.8 L452.2 262.3 L456.2 262.8 L460.2 263.4 L464.2 263.9 L468.2 264.4 L472.2 265.0 L476.2 265.5 L479.8 266.0 L478.5 275.5 L486.0 276.6 L487.3 267.1 L487.3 267.1 L491.3 267.7 L495.3 268.2 L499.3 268.8 L503.3 269.4 L507.3 270.0 L511.3 270.6 L515.3 271.2 L519.3 271.8 L523.3 272.4 L526.7 272.9 L525.2 282.4 L532.4 283.5 L533.9 274.0 L533.9 274.0 L537.9 274.6 L541.9 275.3 L545.9 275.9 L549.9 276.5 L553.9 277.1 L557.9 277.8 L561.9 278.4 L565.9 279.0 L569.9 279.6 L573.3 280.1 L571.9 289.6 L579.6 290.7 L581.0 281.2 L581.0 281.2 L585.0 281.8 L589.0 282.3 L593.0 282.9 L597.0 283.4 L601.0 283.9 L605.0 284.4 L609.0 284.8 L613.0 285.3 L617.0 285.7 L620.7 286.0 L619.9 295.6 L627.4 296.2 L628.2 286.7 L628.2 286.7 L632.2 287.0 L636.2 287.3 L640.2 287.6 L644.2 287.8 L648.2 288.1 L652.2 288.4 L656.2 288.6 L660.2 288.8 L664.2 289.1 L667.8 289.3 L667.2 298.9 L674.7 299.4 L675.3 289.8 L675.3 289.8 L679.3 290.0 L683.3 290.3 L687.3 290.6 L689.9 290.8 L671.3 90.3 L635.6 90.3 L635.6 81.5 L628.3 81.5 L628.3 90.3 L588.6 90.3 L588.6 81.5 L581.3 81.5 L581.3 90.3 L541.6 90.3 L541.6 81.5 L534.3 81.5 L534.3 90.3 L494.6 90.3 L494.6 81.5 L487.3 81.5 L487.3 90.3 L447.6 90.3 L447.6 81.5 L440.3 81.5 L440.3 90.3 L400.6 90.3 L400.6 81.5 L393.3 81.5 L393.3 90.3 L353.6 90.3 L353.6 81.5 L346.3 81.5 L346.3 90.3 L306.6 90.3 L306.6 81.5 L299.3 81.5 L299.3 90.3 L259.6 90.3 L259.6 81.5 L252.3 81.5 L252.3 90.3 L212.6 90.3 L212.6 81.5 L205.3 81.5 L205.3 90.3 L165.6 90.3 L165.6 81.5 L158.3 81.5 L158.3 90.3 L118.6 90.3 L118.6 81.5 L111.3 81.5 L111.3 90.3 L61.9 90.3 Z" fill="none" stroke="#e0e0e0" stroke-width="1" stroke-linejoin="miter"/>
<g stroke="#8a0a22" stroke-width="1" fill="none"><line x1="3.5" y1="310.5" x2="32.5" y2="310.5"/><line x1="17.5" y1="294.5" x2="17.5" y2="323.5"/><circle cx="17.5" cy="310.5" r="3.2"/></g>
</svg></div>
</div></body></html>
